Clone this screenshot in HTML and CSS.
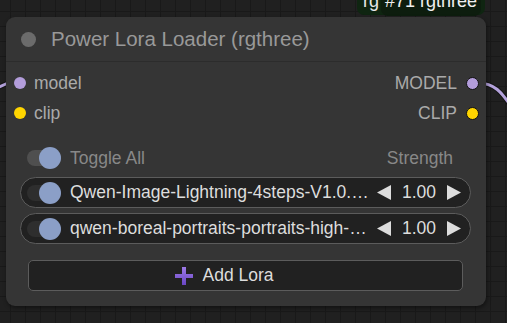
FILE: index.html
```html
<!DOCTYPE html>
<html>
<head>
<meta charset="utf-8">
<link rel="stylesheet" href="styles.css">
</head>
<body>
<div class="canvas">
  <svg class="links" width="507" height="323" viewBox="0 0 507 323">
    <path d="M-12,92 L8,83" class="link-bg"/>
    <path d="M-12,92 L8,83" class="link"/>
    <path d="M478,83 C494,83 502,92 512,108" class="link-bg"/>
    <path d="M478,83 C494,83 502,92 512,108" class="link"/>
  </svg>

  <div class="tag">
    <span class="tag-ghost">rg</span>
    <span class="tag-inner">#71 rgthree</span>
  </div>

  <div class="node">
    <div class="node-title">
      <span class="title-dot"></span>
      <span class="title-text">Power Lora Loader (rgthree)</span>
    </div>
    <div class="slots">
      <div class="slot-row">
        <div class="slot-in"><span class="dot dot-model"></span><span>model</span></div>
        <div class="slot-out"><span>MODEL</span><span class="dot dot-model dot-out"></span></div>
      </div>
      <div class="slot-row">
        <div class="slot-in"><span class="dot dot-clip"></span><span>clip</span></div>
        <div class="slot-out"><span>CLIP</span><span class="dot dot-clip dot-out"></span></div>
      </div>
    </div>

    <div class="widgets">
      <div class="toggle-all">
        <div class="toggle-group">
          <span class="toggle light"><span class="knob"></span></span>
          <span>Toggle All</span>
        </div>
        <span>Strength</span>
      </div>

      <div class="lora-row">
        <span class="toggle"><span class="knob"></span></span>
        <span class="lora-name">Qwen-Image-Lightning-4steps-V1.0.safetensors</span>
        <span class="strength">
          <svg class="arrow" width="14" height="15" viewBox="0 0 14 15"><path d="M14,0 L14,15 L0,7.5 Z"/></svg>
          <span class="value">1.00</span>
          <svg class="arrow" width="14" height="15" viewBox="0 0 14 15"><path d="M0,0 L0,15 L14,7.5 Z"/></svg>
        </span>
      </div>

      <div class="lora-row">
        <span class="toggle"><span class="knob"></span></span>
        <span class="lora-name">qwen-boreal-portraits-portraits-high-rank.safetensors</span>
        <span class="strength">
          <svg class="arrow" width="14" height="15" viewBox="0 0 14 15"><path d="M14,0 L14,15 L0,7.5 Z"/></svg>
          <span class="value">1.00</span>
          <svg class="arrow" width="14" height="15" viewBox="0 0 14 15"><path d="M0,0 L0,15 L14,7.5 Z"/></svg>
        </span>
      </div>

      <div class="add-lora">
        <svg class="plus" width="18" height="18" viewBox="0 0 18 18">
          <defs>
            <linearGradient id="pg" x1="0" y1="0" x2="0" y2="1">
              <stop offset="0" stop-color="#9d7ae6"/>
              <stop offset="1" stop-color="#6a46c4"/>
            </linearGradient>
          </defs>
          <path d="M7,0 H11 V7 H18 V11 H11 V18 H7 V11 H0 V7 H7 Z" fill="url(#pg)"/>
        </svg>
        <span>Add Lora</span>
      </div>
    </div>
  </div>
</div>
</body>
</html>
```

FILE: styles.css
```css
* { box-sizing: border-box; }

html, body {
  margin: 0;
  padding: 0;
}

body {
  background: #202020;
  font-family: "Liberation Sans", Arial, sans-serif;
}

.canvas {
  position: relative;
  width: 507px;
  height: 323px;
  overflow: hidden;
  background-color: #202020;
  background-image:
    linear-gradient(to right, #191919 1px, transparent 1px),
    linear-gradient(to bottom, #191919 1px, transparent 1px);
  background-size: 15px 15px;
  background-position: 10px 11px;
}

.links {
  position: absolute;
  left: 0;
  top: 0;
}

.link {
  fill: none;
  stroke: #b4a2dc;
  stroke-width: 3;
}

.link-bg {
  fill: none;
  stroke: #141414;
  stroke-width: 5;
}

.tag {
  position: absolute;
  left: 357px;
  top: -12px;
  width: 128px;
  height: 27px;
  background: #0f2511;
  border-radius: 7px;
  color: #f0f0f0;
  font-size: 18px;
  line-height: 18px;
}

.tag-ghost {
  position: absolute;
  left: 6px;
  top: 4px;
  color: #e8e8e8;
}

.tag-inner {
  position: absolute;
  left: 24px;
  top: 0;
  height: 28px;
  padding: 4px 0 0 4px;
  width: 100px;
  background: #0d1d0e;
  border-radius: 0 0 7px 7px;
  white-space: nowrap;
}

.node {
  position: absolute;
  left: 6px;
  top: 17px;
  width: 480px;
  height: 289px;
  background: #353535;
  border-radius: 9px;
  box-shadow: 1px 2px 4px rgba(0, 0, 0, 0.45);
  display: flex;
  flex-direction: column;
}

.node-title {
  height: 45px;
  display: flex;
  align-items: center;
  padding-left: 15px;
  gap: 15px;
  border-bottom: 1px solid #2c2c2c;
  flex-shrink: 0;
}

.title-dot {
  width: 15px;
  height: 15px;
  border-radius: 50%;
  background: #6b6b6b;
}

.title-text {
  color: #999999;
  font-size: 20.5px;
}

.slots {
  padding-top: 6px;
  display: flex;
  flex-direction: column;
}

.slot-row {
  height: 30px;
  display: flex;
  justify-content: space-between;
  align-items: center;
  color: #aaaaaa;
  font-size: 17.5px;
}

.slot-in {
  display: flex;
  align-items: center;
  gap: 8px;
  padding-left: 8px;
}

.slot-out {
  display: flex;
  align-items: center;
  gap: 9px;
  padding-right: 7px;
}

.dot {
  width: 12px;
  height: 12px;
  border-radius: 50%;
  display: inline-block;
}

.dot-model { background: #b39ddb; }
.dot-clip { background: #ffd500; }

.dot-out {
  width: 13px;
  height: 13px;
  border: 1.5px solid #111;
}

.widgets {
  padding: 14px 15px 0 14px;
  display: flex;
  flex-direction: column;
  gap: 5px;
}

.toggle-all {
  height: 30px;
  display: flex;
  align-items: center;
  justify-content: space-between;
  padding: 2px 18px 0 7px;
  color: #888888;
  font-size: 17.5px;
}

.toggle-group {
  display: flex;
  align-items: center;
  gap: 9px;
}

.toggle {
  position: relative;
  width: 34px;
  height: 16px;
  border-radius: 8px;
  background: #2e2e2e;
  flex-shrink: 0;
}

.toggle.light {
  background: #4f4f4f;
}

.knob {
  position: absolute;
  right: 0;
  top: -3px;
  width: 22px;
  height: 22px;
  border-radius: 50%;
  background: #8b9fc7;
}

.lora-row {
  height: 31px;
  border: 1.5px solid #5c5c5c;
  border-radius: 16px;
  background: #212121;
  display: flex;
  align-items: center;
  padding: 0 9px 0 6px;
  color: #dddddd;
  font-size: 17.5px;
}

.lora-row .toggle {
  margin-right: 9px;
}

.lora-name {
  flex: 1;
  min-width: 0;
  white-space: nowrap;
  overflow: hidden;
  text-overflow: ellipsis;
}

.strength {
  display: flex;
  align-items: center;
  margin-left: 5px;
}

.arrow {
  fill: #dddddd;
  display: block;
}

.value {
  width: 56px;
  text-align: center;
}

.add-lora {
  margin: 11px 8px 0 8px;
  height: 31px;
  border: 1.5px solid #5c5c5c;
  border-radius: 5px;
  background: #212121;
  display: flex;
  align-items: center;
  justify-content: center;
  gap: 9px;
  color: #dddddd;
  font-size: 17.5px;
  padding-right: 42px;
}

.plus {
  display: block;
}
```
